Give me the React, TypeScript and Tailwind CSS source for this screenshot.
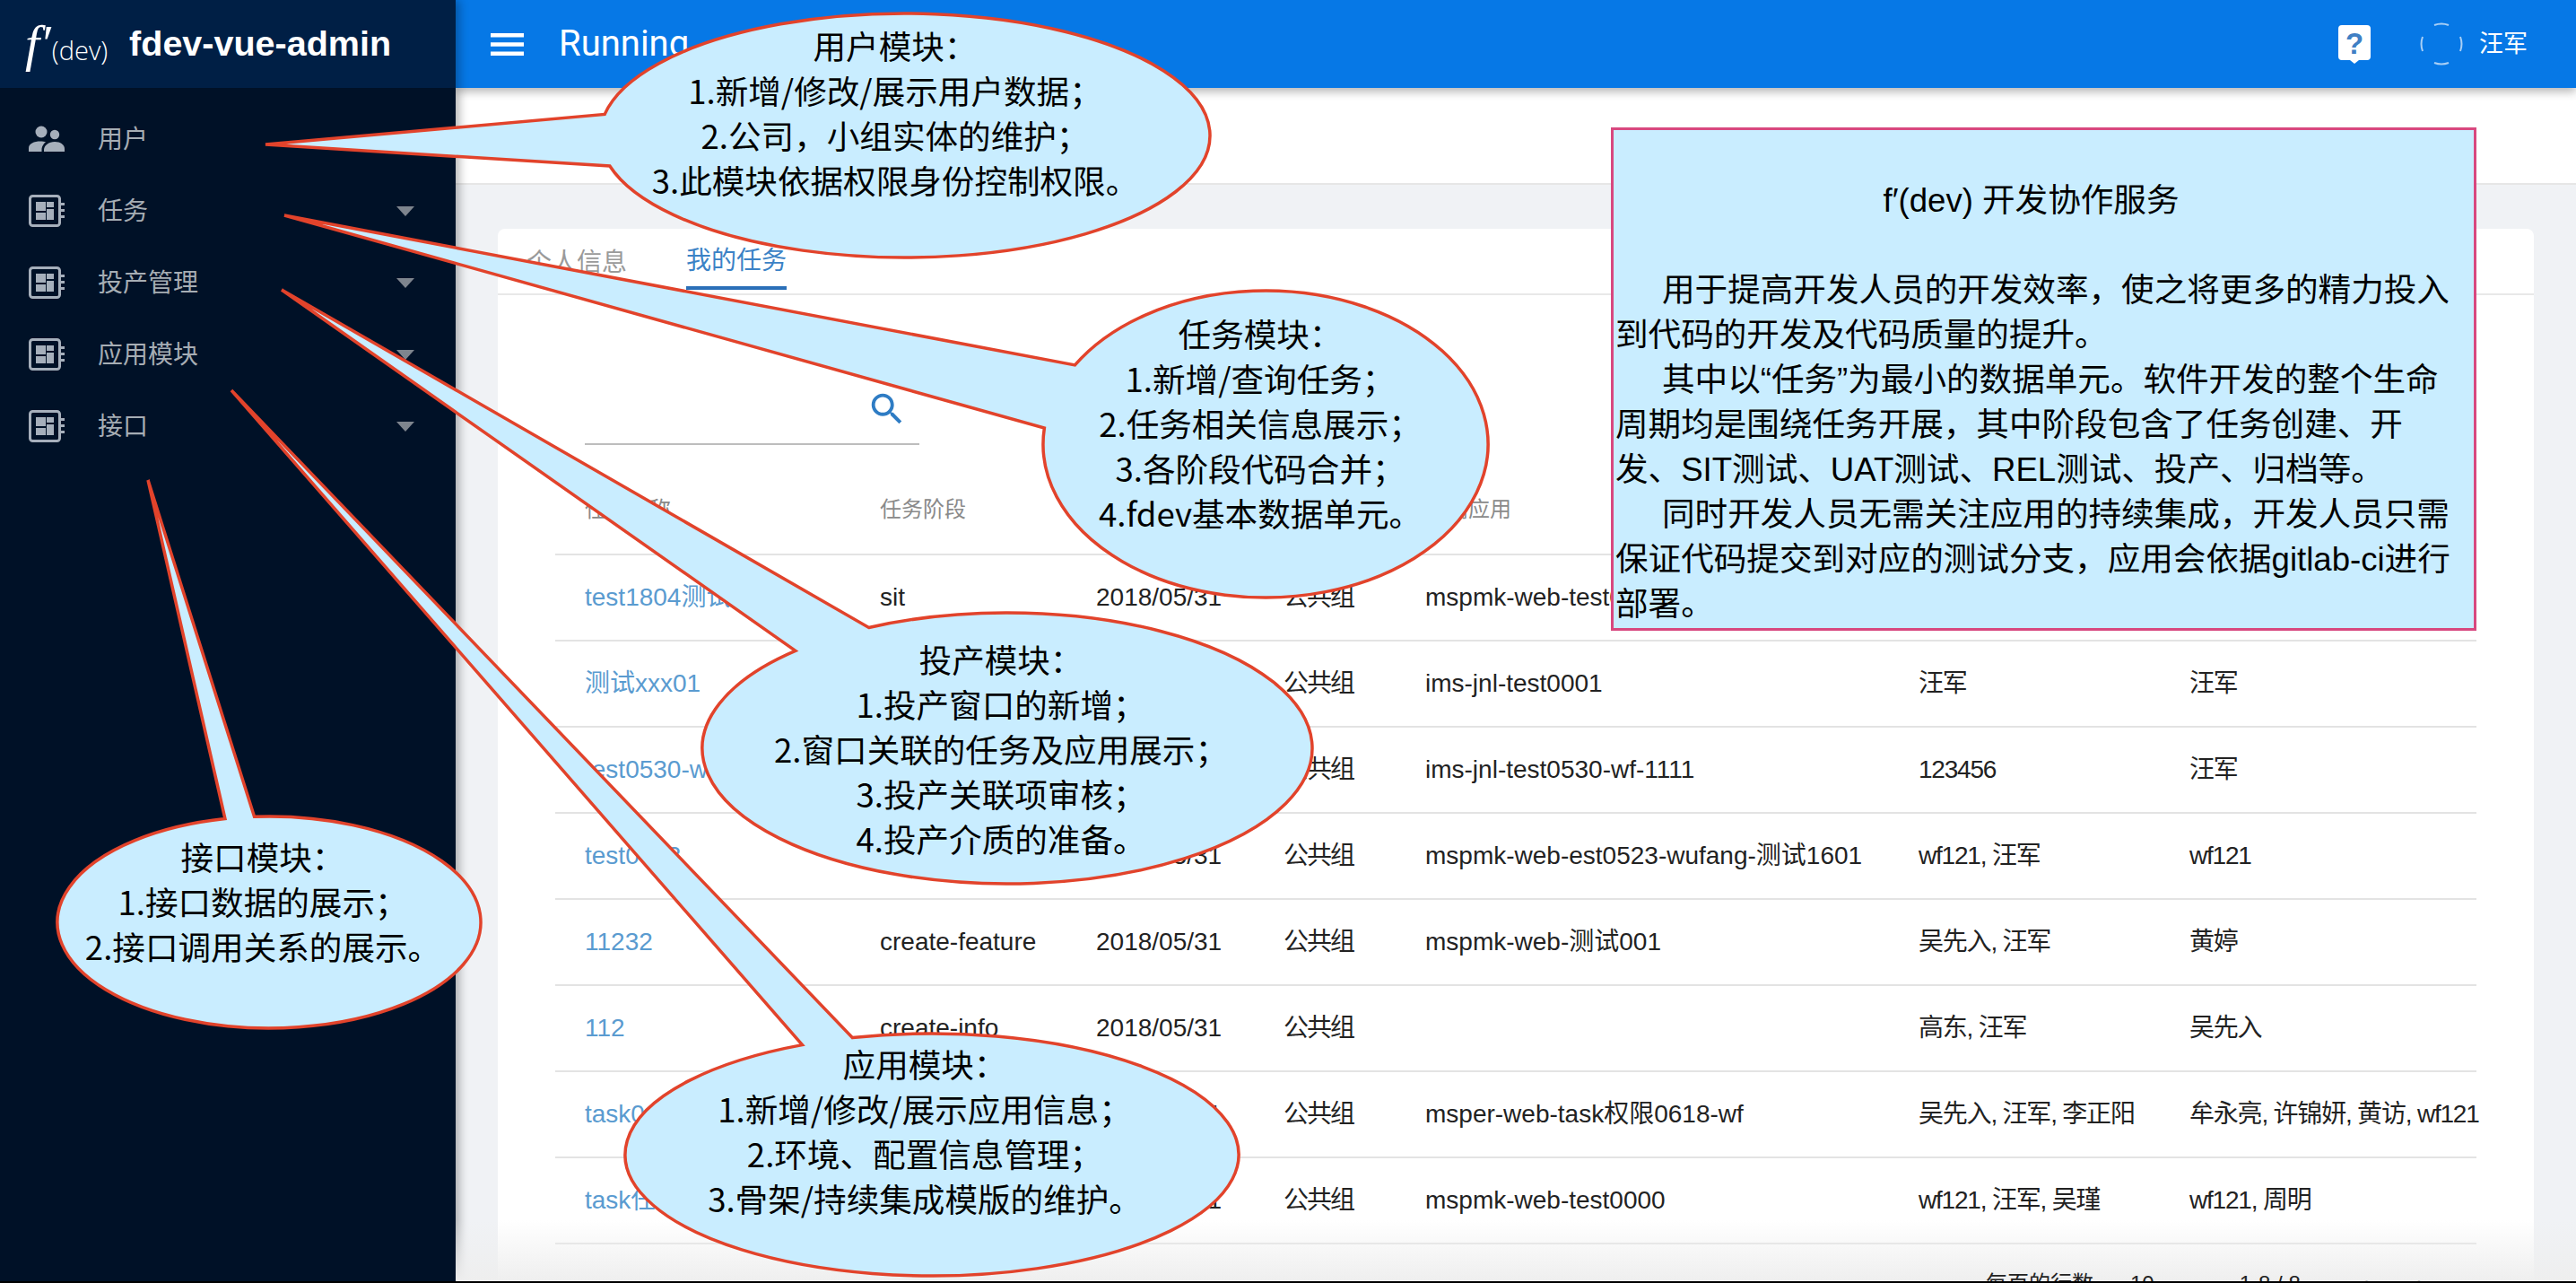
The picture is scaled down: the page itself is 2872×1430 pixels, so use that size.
import React from 'react';

const bubbles = [
  {
    cx: 1009, cy: 151, rx: 340, ry: 136, from: 190, to: 165.5, tip: [296, 161],
    pos: 'left-[998px] top-[26px]',
    lines: ['用户模块：', '1.新增/修改/展示用户数据；', '2.公司，小组实体的维护；', '3.此模块依据权限身份控制权限。'],
  },
  {
    cx: 1411, cy: 495, rx: 248, ry: 171, from: 211, to: 186, tip: [317, 240],
    pos: 'left-[1405px] top-[347px]',
    lines: ['任务模块：', '1.新增/查询任务；', '2.任务相关信息展示；', '3.各阶段代码合并；', '4.fdev基本数据单元。'],
  },
  {
    cx: 1123, cy: 834, rx: 340, ry: 151, from: 243, to: 226, tip: [314, 323],
    pos: 'left-[1116px] top-[710px]',
    lines: ['投产模块：', '1.投产窗口的新增；', '2.窗口关联的任务及应用展示；', '3.投产关联项审核；', '4.投产介质的准备。'],
  },
  {
    cx: 1039, cy: 1287, rx: 342, ry: 135, from: 255, to: 245, tip: [258, 435],
    pos: 'left-[1031px] top-[1161px]',
    lines: ['应用模块：', '1.新增/修改/展示应用信息；', '2.环境、配置信息管理；', '3.骨架/持续集成模版的维护。'],
  },
  {
    cx: 300, cy: 1028, rx: 236, ry: 118, from: 266, to: 258, tip: [165, 535],
    pos: 'left-[293px] top-[930px]',
    lines: ['接口模块：', '1.接口数据的展示；', '2.接口调用关系的展示。'],
  },
];

const rows = [
  ['test1804测试任务', 'sit', '2018/05/31', '公共组', 'mspmk-web-test0530', '', ''],
  ['测试xxx01', 'sit', '2018/05/31', '公共组', 'ims-jnl-test0001', '汪军', '汪军'],
  ['test0530-wf', 'sit', '2018/05/31', '公共组', 'ims-jnl-test0530-wf-1111', '123456', '汪军'],
  ['test0523', 'sit', '2018/05/31', '公共组', 'mspmk-web-est0523-wufang-测试1601', 'wf121, 汪军', 'wf121'],
  ['11232', 'create-feature', '2018/05/31', '公共组', 'mspmk-web-测试001', '吴先入, 汪军', '黄婷'],
  ['112', 'create-info', '2018/05/31', '公共组', '', '高东, 汪军', '吴先入'],
  ['task0618', 'sit', '2018/05/31', '公共组', 'msper-web-task权限0618-wf', '吴先入, 汪军, 李正阳', '牟永亮, 许锦妍, 黄访, wf121'],
  ['task任务', 'sit', '2018/05/31', '公共组', 'mspmk-web-test0000', 'wf121, 汪军, 吴瑾', 'wf121, 周明'],
];

// the CJK columns run a little tighter than the Latin ones in the reference
const cellClass = [
  'text-[#5a9bd0]',
  '',
  '',
  'tracking-[-2px]',
  '',
  'tracking-[-1.2px]',
  'tracking-[-1.2px]',
];

const menu = ['用户', '任务', '投产管理', '应用模块', '接口'];

const bubblePath = (b: (typeof bubbles)[number]) => {
  const pt = (deg: number) => {
    const a = (deg * Math.PI) / 180;
    return `${b.cx + b.rx * Math.cos(a)} ${b.cy + b.ry * Math.sin(a)}`;
  };
  return `M${pt(b.from)} A${b.rx} ${b.ry} 0 1 1 ${pt(b.to)} L${b.tip[0]} ${b.tip[1]} Z`;
};

const UsersIcon = () => (
  <svg width="40" height="36" viewBox="0 0 40 36" fill="#a6afbb">
    <circle cx="14" cy="10" r="6.5" />
    <circle cx="29" cy="13" r="5.2" />
    <path d="M0 32v-4c0-5 6-7.5 13-7.5 2.500 0 4.500.3 6 .8-2.500 2-4 4.500-4.500 7.500v3.200H0z" />
    <path d="M17 32v-2c0-5 5.500-9 12-9s11 3.500 11 8v3H17z" />
  </svg>
);

const ModuleIcon = () => (
  <svg width="40" height="36" viewBox="0 0 40 36" fill="#a6afbb">
    <rect x="1.500" y="1.500" width="33" height="33" rx="3" fill="none" stroke="#a6afbb" strokeWidth="3" />
    <rect x="8" y="8" width="11" height="10" />
    <rect x="8" y="20" width="11" height="8" />
    <rect x="20" y="8" width="8" height="6" />
    <rect x="20" y="16" width="8" height="12" />
    <rect x="35" y="9" width="5" height="3" />
    <rect x="35" y="16" width="5" height="3" />
    <rect x="35" y="23" width="5" height="3" />
  </svg>
);

const Sidebar = () => (
  <aside className="relative z-20 flex w-[508px] shrink-0 flex-col bg-[#001127] shadow-[4px_0_10px_rgba(0,0,0,0.3)]">
    <div className="flex h-[98px] items-center bg-[#001f45] pl-[28px] text-white">
      <span className="font-['Liberation_Serif',serif] text-[58px] leading-none italic">f′</span>
      <span className="ml-[1px] mt-[12px] font-['Open_Sans',sans-serif] text-[29px] font-light leading-none">(dev)</span>
      <span className="ml-[24px] font-['Liberation_Sans',sans-serif] text-[39.5px] font-bold leading-none">fdev-vue-admin</span>
    </div>
    <nav className="flex flex-col pt-[17px]">
      {menu.map((label, i) => (
        <div key={label} className="flex h-[80px] items-center pl-[32px] text-[28px] text-[#a6adb4]">
          {i === 0 ? <UsersIcon /> : <ModuleIcon />}
          <span className="ml-[37px] mt-[2px]">{label}</span>
          {i > 0 && (
            <svg className="ml-auto mr-[46px]" width="20" height="11" viewBox="0 0 20 11" fill="#7e858e">
              <polygon points="0,0 20,0 10,11" />
            </svg>
          )}
        </div>
      ))}
    </nav>
  </aside>
);

const TopBar = () => (
  <header className="relative z-10 flex h-[98px] shrink-0 items-center bg-[#0678e6] pl-[39px] pr-[54px] text-white shadow-[0_4px_10px_rgba(0,0,0,0.3)]">
    <svg width="37" height="25" viewBox="0 0 37 25" fill="#fff">
      <rect width="37" height="4.500" />
      <rect y="10.250" width="37" height="4.500" />
      <rect y="20.500" width="37" height="4.500" />
    </svg>
    <span className="ml-[39px] font-['Roboto',sans-serif] text-[40px] leading-none">Running</span>
    <svg className="ml-auto" width="36" height="43" viewBox="0 0 36 43">
      <path d="M4 0h28a4 4 0 0 1 4 4v31a4 4 0 0 1-4 4h-9l-5 4-5-4H4a4 4 0 0 1-4-4V4a4 4 0 0 1 4-4z" fill="#fff" />
      <text x="18" y="32" textAnchor="middle" fontSize="33" fontWeight="700" fill="#3f7fc4" fontFamily="Liberation Sans">?</text>
    </svg>
    <svg className="ml-[54px]" width="50" height="50" viewBox="0 0 50 50" fill="none" stroke="#a9cff5" strokeWidth="2">
      <path d="M17 4a23 23 0 0 1 16 0" />
      <path d="M17 46a23 23 0 0 0 16 0" />
      <path d="M4 17a23 23 0 0 0 0 16" />
      <path d="M46 17a23 23 0 0 1 0 16" />
    </svg>
    <span className="ml-[17px] text-[27px]">汪军</span>
  </header>
);

const gridCols = 'grid grid-cols-[329px_241px_209px_158px_550px_302px_1fr] items-center pl-[33px] border-b-2 border-[#e3e3e3] whitespace-nowrap';

const TaskCard = () => (
  <div className="mx-[47px] mt-[49px] shrink-0 rounded-t-lg bg-white">
    <div className="flex h-[74px] gap-[66px] border-b-2 border-[#e8e8e8] pl-[32px] text-[28px]">
      <div className="flex h-[68px] items-center pt-[8px] text-[#9a9a9a]">个人信息</div>
      <div className="flex h-[68px] items-center border-b-4 border-[#2a6fb8] pt-[8px] text-[#3b82c6]">我的任务</div>
    </div>
    <div className="ml-[97px] mt-[104px] flex h-[63px] w-[373px] justify-end border-b-2 border-[#bdbdbd] pr-[13px]">
      <svg width="46" height="46" viewBox="0 0 24 24" fill="#2e7cc4">
        <path d="M15.500 14h-.79l-.28-.27C15.410 12.590 16 11.110 16 9.500 16 5.910 13.090 3 9.500 3S3 5.910 3 9.500 5.910 16 9.500 16c1.610 0 3.090-.59 4.230-1.570l.27.28v.79l5 4.990L20.490 19l-4.990-5zm-6 0C7.010 14 5 11.990 5 9.500S7.010 5 9.500 5 14 7.010 14 9.500 11.990 14 9.500 14z" />
      </svg>
    </div>
    <div className="mx-[64px] mt-[23px]">
      <div className={`${gridCols} h-[100px] text-[24px] text-[#8a8a8a]`}>
        {['任务名称', '任务阶段', '启动时间', '小组', '所属应用', '开发人员', '测试人员'].map((h) => (
          <div key={h}>{h}</div>
        ))}
      </div>
      {rows.map((row, i) => (
        <div key={i} className={`${gridCols} h-[96px] text-[28px] text-[#222222]`}>
          {row.map((cell, j) => (
            <div key={j} className={cellClass[j]}>
              {cell}
            </div>
          ))}
        </div>
      ))}
    </div>
    <div className="relative z-30 flex h-[88px] items-center whitespace-nowrap pl-[1659px] text-[24px] text-[#222222]">
      <span>每页的行数</span>
      <span className="ml-[41px]">10</span>
      <span className="ml-[95px]">1-8 / 8</span>
      <span className="ml-[68px] text-[#999999]">‹</span>
      <span className="ml-[54px] text-[#999999]">›</span>
    </div>
  </div>
);

const IntroBox = () => (
  <div className="absolute left-[1796px] top-[142px] h-[561px] w-[965px] whitespace-nowrap border-[3px] border-[#d8487f] bg-[#c9edff] pl-[2px] pt-[54px] font-['Liberation_Sans','Noto_Sans_CJK_SC',sans-serif] text-[36.6px] leading-[50px] text-black">
    <div className="pr-[30px] text-center">f′(dev) 开发协作服务</div>
    <div className="h-[50px]" />
    <div className="pl-[52px]">用于提高开发人员的开发效率，使之将更多的精力投入</div>
    <div>到代码的开发及代码质量的提升。</div>
    <div className="pl-[52px]">其中以“任务”为最小的数据单元。软件开发的整个生命</div>
    <div>周期均是围绕任务开展，其中阶段包含了任务创建、开</div>
    <div>发、SIT测试、UAT测试、REL测试、投产、归档等。</div>
    <div className="pl-[52px]">同时开发人员无需关注应用的持续集成，开发人员只需</div>
    <div>保证代码提交到对应的测试分支，应用会依据gitlab-ci进行</div>
    <div>部署。</div>
  </div>
);

export default function App() {
  return (
    <div className="relative flex h-[1430px] w-[2872px] overflow-hidden bg-[#f0f2f5] font-['Liberation_Sans','Noto_Sans_CJK_SC',sans-serif]">
      <Sidebar />
      <main className="flex min-w-0 flex-1 flex-col">
        <TopBar />
        <div className="h-[108px] shrink-0 border-b-2 border-[#e6e6e6] bg-white" />
        <TaskCard />
      </main>

      {/* bottom fade of the captured page */}
      <div className="absolute bottom-0 left-[508px] right-0 z-20 h-[70px] bg-linear-to-b from-transparent to-[#eeeeee]" />
      <div className="absolute bottom-0 left-0 right-0 z-30 h-[2px] bg-black" />

      {/* callouts drawn over the app */}
      <svg className="absolute left-0 top-0 z-30" width="2872" height="1430" viewBox="0 0 2872 1430">
        {bubbles.map((b, i) => (
          <path key={i} d={bubblePath(b)} fill="#c9edff" stroke="#e2432b" strokeWidth="3.5" />
        ))}
      </svg>
      <div className="absolute left-0 top-0 z-30 font-['Noto_Sans_CJK_SC',sans-serif]">
        {bubbles.map((b, i) => (
          <div key={i} className={`absolute ${b.pos} -translate-x-1/2 whitespace-nowrap text-center text-[36.6px] leading-[50px] text-black`}>
            {b.lines.map((line) => (
              <div key={line}>{line}</div>
            ))}
          </div>
        ))}
        <IntroBox />
      </div>
    </div>
  );
}
